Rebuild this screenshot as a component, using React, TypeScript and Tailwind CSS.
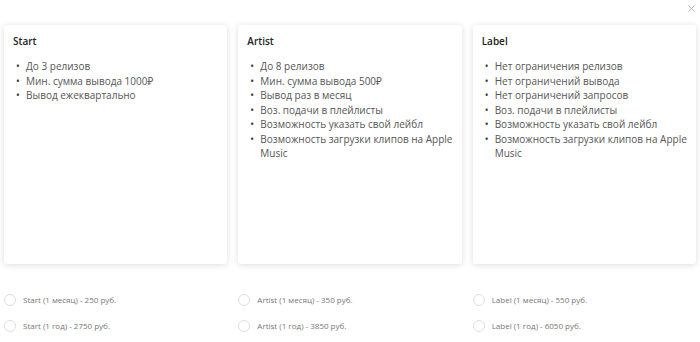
import React from "react";

const plans = [
  {
    title: "Start",
    items: ["До 3 релизов", "Мин. сумма вывода 1000₽", "Вывод ежеквартально"],
    options: ["Start (1 месяц) - 250 руб.", "Start (1 год) - 2750 руб."],
  },
  {
    title: "Artist",
    items: [
      "До 8 релизов",
      "Мин. сумма вывода 500₽",
      "Вывод раз в месяц",
      "Воз. подачи в плейлисты",
      "Возможность указать свой лейбл",
      "Возможность загрузки клипов на Apple Music",
    ],
    options: ["Artist (1 месяц) - 350 руб.", "Artist (1 год) - 3850 руб."],
  },
  {
    title: "Label",
    items: [
      "Нет ограничения релизов",
      "Нет ограничений вывода",
      "Нет ограничений запросов",
      "Воз. подачи в плейлисты",
      "Возможность указать свой лейбл",
      "Возможность загрузки клипов на Apple Music",
    ],
    options: ["Label (1 месяц) - 550 руб.", "Label (1 год) - 6050 руб."],
  },
];

export default function App() {
  return (
    <div
      className="relative w-[700px] h-[342px] bg-white overflow-hidden"
      style={{ fontFamily: '"Open Sans", "Noto Sans", sans-serif' }}
    >
      <button className="absolute right-[4px] top-[3px] w-[10px] h-[10px] flex items-center justify-center">
        <svg width="7" height="7" viewBox="0 0 7 7">
          <path d="M0.5 0.5 L6.5 6.5 M6.5 0.5 L0.5 6.5" stroke="#b0b0b0" strokeWidth="0.9" />
        </svg>
      </button>
      <div className="grid grid-cols-3 gap-[11px] pl-[4px] pr-[4px] pt-[25px]">
        {plans.map((p) => (
          <div key={p.title} className="flex flex-col">
            <div className="h-[239px] rounded-[3px] bg-white shadow-[0_1px_6px_rgba(0,0,0,0.14)] pl-[9px] pr-[2px] pt-[9px]">
              <div className="text-[10px] font-semibold text-[#222] leading-[14px]">{p.title}</div>
              <ul className="mt-[11px] text-[10px] leading-[14.5px] text-[#555]">
                {p.items.map((it) => (
                  <li key={it} className="flex">
                    <span className="w-[13px] shrink-0 pl-[3px] text-[#333]">•</span>
                    <span>{it}</span>
                  </li>
                ))}
              </ul>
            </div>
            <div className="flex flex-col gap-[14px] mt-[30px]">
              {p.options.map((o) => (
                <label key={o} className="flex items-center gap-[7px] h-[12px]">
                  <span className="w-[12px] h-[12px] rounded-full border border-[#dedede] bg-white shrink-0" />
                  <span className="text-[8px] text-[#777] leading-[12px]">{o}</span>
                </label>
              ))}
            </div>
          </div>
        ))}
      </div>
    </div>
  );
}
